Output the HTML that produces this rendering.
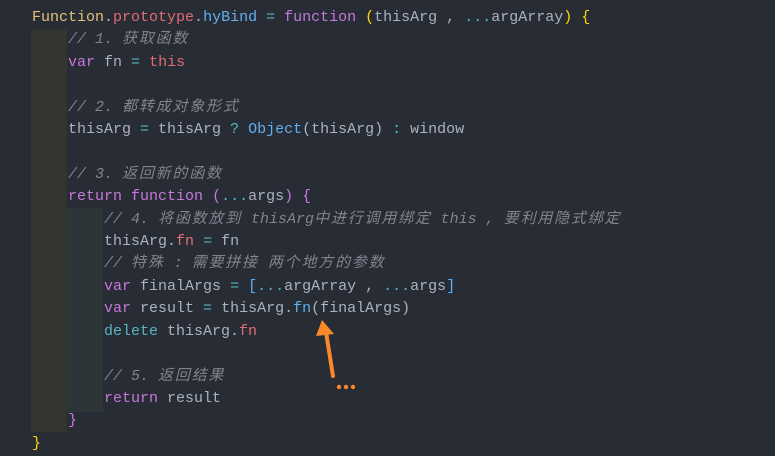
<!DOCTYPE html>
<html><head><meta charset="utf-8"><style>
body{margin:0;width:775px;height:456px;background:#282c34;overflow:hidden;position:relative}
.g1{position:absolute;left:31px;top:29px;width:36px;height:403px;background:#33362f}
.g2{position:absolute;left:67px;top:208px;width:36px;height:204px;background:#2d3537}
pre{position:absolute;left:32px;top:7px;margin:0;font:15px/22.4px "Liberation Mono","Noto Sans CJK SC",monospace;color:#abb2bf}
.c{color:#7f848e;font-style:italic}.k{color:#c678dd}.r{color:#e06c75}.b{color:#61afef}.o{color:#56b6c2}.y{color:#e5c07b}.p{color:#ffd700}
i{font-style:italic;letter-spacing:1.8px}
</style></head><body>
<div class="g1"></div><div class="g2"></div>
<pre><span class="y">Function</span>.<span class="r">prototype</span>.<span class="b">hyBind</span> <span class="o">=</span> <span class="k">function</span> <span class="p">(</span>thisArg , <span class="o">...</span>argArray<span class="p">)</span> <span class="p">{</span>
    <span class="c">// 1. <i>获取函数</i></span>
    <span class="k">var</span> fn <span class="o">=</span> <span class="r">this</span>

    <span class="c">// 2. <i>都转成对象形式</i></span>
    thisArg <span class="o">=</span> thisArg <span class="o">?</span> <span class="b">Object</span>(thisArg) <span class="o">:</span> window

    <span class="c">// 3. <i>返回新的函数</i></span>
    <span class="k">return</span> <span class="k">function</span> <span class="k">(</span><span class="o">...</span>args<span class="k">)</span> <span class="k">{</span>
        <span class="c">// 4. <i>将函数放到</i> thisArg<i>中进行调用绑定</i> this , <i>要利用隐式绑定</i></span>
        thisArg.<span class="r">fn</span> <span class="o">=</span> fn
        <span class="c">// <i>特殊</i> : <i>需要拼接</i> <i>两个地方的参数</i></span>
        <span class="k">var</span> finalArgs <span class="o">=</span> <span class="b">[</span><span class="o">...</span>argArray , <span class="o">...</span>args<span class="b">]</span>
        <span class="k">var</span> result <span class="o">=</span> thisArg.<span class="b">fn</span>(finalArgs)
        <span class="o">delete</span> thisArg.<span class="r">fn</span>

        <span class="c">// 5. <i>返回结果</i></span>
        <span class="k">return</span> result
    <span class="k">}</span>
<span class="p">}</span></pre>
<svg width="775" height="456" style="position:absolute;left:0;top:0">
<line x1="333" y1="376" x2="326" y2="332" stroke="#f7892b" stroke-width="4" stroke-linecap="round"/>
<polygon points="322,320 316,336 334,334" fill="#f7892b"/>
<circle cx="339" cy="387" r="2.2" fill="#f7892b"/><circle cx="346" cy="387" r="2.2" fill="#f7892b"/><circle cx="353" cy="387" r="2.2" fill="#f7892b"/>
</svg>
</body></html>
